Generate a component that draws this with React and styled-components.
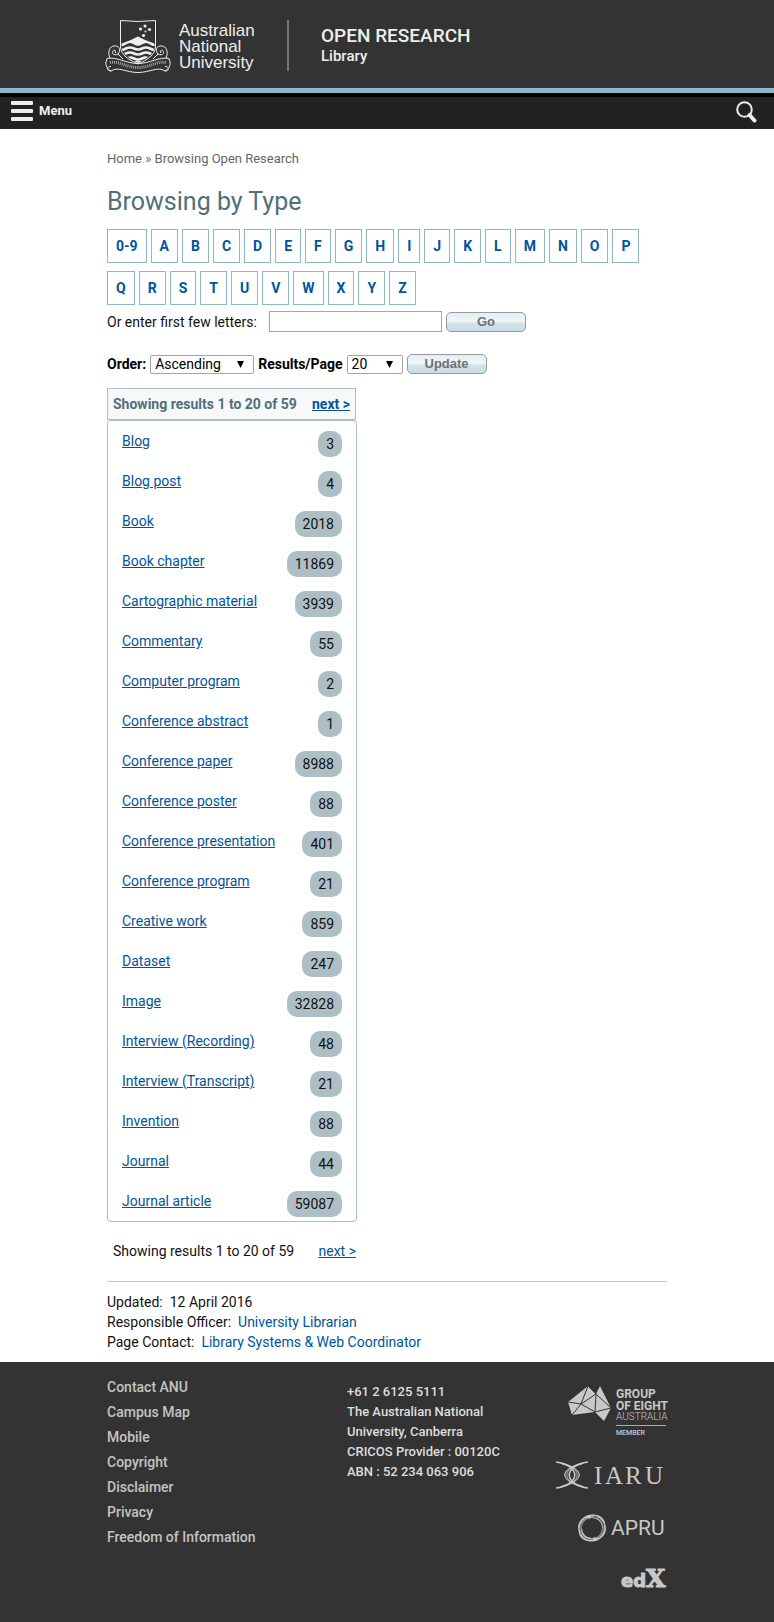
import React from 'react';
import styled, { createGlobalStyle } from 'styled-components';

const GlobalStyle = createGlobalStyle`
  *, *::before, *::after { box-sizing: border-box; }
  body {
    margin: 0;
    background: #fff;
    color: #111;
    font: 14px/20px Roboto, "Liberation Sans", sans-serif;
  }
`;

const Container = styled.div`
  max-width: 560px;
  margin: 0 auto;
`;

const Banner = styled.header`
  background: #333;
  border-bottom: 5px solid #8cb8cc;
`;

const BannerInner = styled(Container)`
  display: flex;
  align-items: flex-start;
  height: 88px;
  padding-top: 20px;
`;

const LogoLink = styled.a`
  display: block;
  width: 184px;
  height: 51px;
  margin-left: -2px;
  border-right: 2px solid #777;
  svg { display: block; overflow: visible; }
`;

const SiteTitle = styled.div`
  margin-left: 32px;
  padding-top: 4px;
  color: #eee;
  font-weight: 500;
`;

const SiteName = styled.div`
  font-size: 19px;
  line-height: 24px;
`;

const SiteUnit = styled.div`
  font-size: 15px;
  line-height: 16px;
`;

const MenuBar = styled.nav`
  display: flex;
  justify-content: space-between;
  align-items: flex-start;
  height: 36px;
  padding: 4px 16px 0 11px;
  background: #222;
  border-top: 4px solid #000;
`;

const BarButton = styled.button`
  display: flex;
  gap: 6px;
  padding: 0;
  border: 0;
  background: none;
  color: #eee;
  font: 700 13px/20px Roboto, sans-serif;
  cursor: pointer;
  svg { display: block; }
`;

const Breadcrumbs = styled.div`
  padding-top: 20px;
  color: #666;
  font-size: 13px;
  a { color: inherit; text-decoration: none; }
`;

const Heading = styled.h1`
  margin: 17px 0 11px;
  color: #4f6f7d;
  font-size: 25px;
  line-height: 32px;
  font-weight: 400;
`;

const LetterList = styled.div`
  display: flex;
  flex-wrap: wrap;
  gap: 8px 4px;
`;

const Letter = styled.a`
  padding: 6px 8px;
  border: 1px solid #8cb8cc;
  color: #00549e;
  font-weight: 700;
  text-decoration: none;
`;

const FormRow = styled.div`
  display: flex;
  align-items: center;
  gap: 4px;
  margin-top: ${p => p.$top}px;
`;

const TextLabel = styled.label`
  min-width: 158px;
`;

const BoldLabel = styled.label`
  color: #000;
  font-weight: 700;
`;

const TextInput = styled.input`
  width: 173px;
  height: 21px;
  padding: 1px 4px;
  border: 1px solid #a5a5a5;
  font: inherit;
`;

const PillButton = styled.button`
  width: 80px;
  height: 20px;
  padding: 0;
  border: 1px solid #999;
  border-radius: 5px;
  background: linear-gradient(#e4eef3, #f1f6f8 48%, #d3e2ea 56%, #c8dce7);
  color: #707070;
  font: 700 13px/16px "Liberation Sans", sans-serif;
  cursor: pointer;
`;

const SelectBox = styled.span`
  display: grid;
  width: ${p => p.$width}px;
  height: 19px;
  align-items: center;
  select, svg { grid-area: 1 / 1; }
  svg { justify-self: end; margin-right: 10px; pointer-events: none; }
  select {
    appearance: none;
    width: 100%;
    height: 19px;
    padding: 0 4px;
    border: 1px solid #a5a5a5;
    border-radius: 2px;
    background: #fff;
    color: #000;
    font: 14px/17px Roboto, sans-serif;
  }
`;

const Results = styled.section`
  width: 250px;
  margin-top: 14px;
`;

const ResultsHeader = styled.div`
  display: flex;
  justify-content: space-between;
  margin-right: 1px;
  padding: 5px;
  border: 1px solid #adbfc5;
  background: #f7f9f8;
  color: #4f6f7d;
  font-weight: 700;
`;

const TextLink = styled.a`
  color: #00549e;
  text-decoration: ${p => (p.$plain ? 'none' : 'underline')};
`;

const TypeList = styled.ul`
  margin: 0;
  padding: 0 14px;
  border: 1px solid #adbfc5;
  border-radius: 4px;
  list-style: none;
`;

const TypeItem = styled.li`
  display: flex;
  justify-content: space-between;
  align-items: flex-start;
  height: 40px;
  padding-top: 10px;
`;

const Count = styled.span`
  padding: 3px 8px;
  border-radius: 10px;
  background: #adbfc5;
`;

const ResultsFooter = styled.div`
  display: flex;
  justify-content: space-between;
  padding: 19px 1px 20px 6px;
`;

const PageInfo = styled.div`
  padding: 10px 0;
  border-top: 1px solid #ccc;
  p { margin: 0; }
`;

const Footer = styled.footer`
  min-height: 260px;
  background: #333;
  color: #ddd;
`;

const FooterInner = styled(Container)`
  display: grid;
  grid-template-columns: 240px 1fr 112px;
`;

const FooterLinks = styled.ul`
  margin: 0;
  padding: 13px 0 0;
  list-style: none;
  font-weight: 500;
  line-height: 25px;
  a { color: #c4c4c4; text-decoration: none; }
`;

const Address = styled.address`
  max-width: 170px;
  padding-top: 20px;
  font-size: 13px;
  font-style: normal;
  font-weight: 500;
`;

const Partners = styled.div`
  display: flex;
  flex-direction: column;
  align-items: flex-end;
  gap: 25px;
  padding-top: 24px;
  a, svg { display: block; }
  svg { overflow: visible; }
`;

const AnuLogo = () => (
  <svg width="146" height="54" viewBox="0 0 146 54" role="img" aria-label="Australian National University">
    <clipPath id="shield"><path d="M16.500 0H49.500V27C49 34 41 39 33 43C25 39 17 34 16.500 27Z" /></clipPath>
    <g fill="none" stroke="#eee">
      <path d="M15.500.5Q33 2.500 50.500.5V27C50 35 42 40 33 44C24 40 16 35 15.500 27Z" />
      <path d="M2 38.500C12 36.500 21 43.500 33 43.500S54 36.500 64 38.500L65 42C66 45 63 50 60 51C53 46 45 52.500 33 52.500S13 46 6 51C3 50 0 45 1 42Z" />
      <path d="M6 51C1 51 2 46 6 46.500M60 51C65 51 64 46 60 46.500" />
      <path d="M5 38C2 32 5 26 9 26C15 25 16 31 13 34C10 36 6 34 8 31C9 29 12 31 10 33M13 34L18 39M61 38C64 32 61 26 57 26C51 25 50 31 53 34C56 36 60 34 58 31C57 29 54 31 56 33M53 34L48 39" />
      <path strokeWidth="3" strokeDasharray="1 1" d="M5 42.500C14 40.500 21 47.500 33 47.500S52 40.500 61 42.500" opacity=".6" />
    </g>
    <g clipPath="url(#shield)">
      <path fill="#eee" d="M15 24Q25 21 33 16.500Q41 21 51 24V26.500Q47 26.500 45 24.500Q41 21.500 37 24.500Q33 27 29 24.500Q25 21.500 21 24.500Q19 26.500 15 26.500Z" />
      <path fill="none" stroke="#eee" strokeWidth="2.600" d="M13 30.500Q17 30.500 21 28.500T29 28.500T37 28.500T45 28.500T53 30.500M13 36Q17 35.500 21 33.500T29 33.500T37 33.500T45 33.500T53 36M21 39Q25 36.500 29 38.500T37 38.500T45 39" />
      <path fill="#eee" d="M27 42Q33 39 39 42L33 45Z" />
    </g>
    <g fill="#eee">
      <circle cx="40" cy="6" r="1.600" /><circle cx="35.500" cy="9" r="1.600" />
      <circle cx="44.500" cy="9.500" r="1.600" /><circle cx="40.500" cy="11.500" r="1" />
      <circle cx="38.500" cy="15.500" r="1.600" />
    </g>
    <g fill="#eee" fontFamily='"Liberation Sans", sans-serif' fontSize="17">
      <text x="74" y="16">Australian</text>
      <text x="74" y="32">National</text>
      <text x="74" y="48">University</text>
    </g>
  </svg>
);

const MenuIcon = () => (
  <svg width="22" height="20" viewBox="0 0 22 20" fill="#eee" aria-hidden="true">
    <rect width="22" height="4" y="0" rx="1" /><rect width="22" height="4" y="8" rx="1" /><rect width="22" height="4" y="16" rx="1" />
  </svg>
);

const SearchIcon = () => (
  <svg width="22" height="22" viewBox="0 0 22 22" fill="none" stroke="#eee" aria-hidden="true">
    <circle cx="8.500" cy="8.500" r="7.300" strokeWidth="2" />
    <path d="M13.500 14L18.500 19.500" strokeWidth="4" strokeLinecap="round" />
  </svg>
);

const Arrow = () => (
  <svg width="7" height="7" viewBox="0 0 7 7" aria-hidden="true"><path d="M0 0H7L3.500 7Z" /></svg>
);

const GroupOfEightLogo = () => (
  <svg width="99" height="50" viewBox="0 0 99 50" role="img" aria-label="Group of Eight Australia, member">
    <path fill="#c8c8c8" d="M0 16L20 0L28 8L32 0L43 22L36 35L27 26L4 29Z" />
    <path fill="none" stroke="#333" d="M0 16L13 18L20 0L28 8L13 18L4 29M13 18L27 26L28 8L43 22L27 26" />
    <g fill="#c8c8c8" fontFamily="Roboto, sans-serif" fontSize="12">
      <text x="48" y="12" fontWeight="700">GROUP</text>
      <text x="48" y="24" fontWeight="700">OF EIGHT</text>
      <text x="48" y="34" fontSize="10" fontWeight="300">AUSTRALIA</text>
      <text x="48" y="49" fontSize="7" fontWeight="500">MEMBER</text>
    </g>
    <path stroke="#aaa" d="M48 39.500H98" />
  </svg>
);

const IaruLogo = () => (
  <svg width="112" height="28" viewBox="0 0 112 28" role="img" aria-label="IARU">
    <g fill="none" stroke="#c8c8c8" strokeWidth=".8">
      <path d="M1 1C26 5 26 23 1 27M33 1C8 5 8 23 33 27" strokeWidth="1.600" />
      <path d="M3 1C29 6 28 22 3 27M5 2C31 7 30 21 5 26M31 1C5 6 6 22 31 27M29 2C3 7 4 21 29 26M7 3C30 9 30 19 7 25M27 3C4 9 4 19 27 25" />
    </g>
    <text x="39 50 70 90" y="23" fill="#c8c8c8" fontFamily='"Liberation Serif", serif' fontSize="25">IARU</text>
  </svg>
);

const ApruLogo = () => (
  <svg width="89" height="28" viewBox="0 0 89 28" role="img" aria-label="APRU">
    <g fill="none" stroke="#c8c8c8">
      <circle cx="14" cy="14" r="11.800" strokeWidth="3.400" />
      <g strokeWidth="1">
        <ellipse cx="14" cy="14" rx="14" ry="11.500" transform="rotate(-45 14 14)" />
        <ellipse cx="14" cy="14" rx="13.500" ry="11.500" transform="rotate(15 14 14)" />
      </g>
    </g>
    <path fill="none" stroke="#333" strokeWidth=".7" d="M3 20Q1 10 10 4M2 16Q2 8 8 4M13 3Q21 2 25 10M16 2Q24 4 26 12M25 9Q27 18 18 24M26 13Q26 20 20 24M15 25Q7 27 3 19" />
    <text x="33" y="21" fill="#c8c8c8" fontFamily="Roboto, sans-serif" fontSize="21">APRU</text>
  </svg>
);

const EdxLogo = () => (
  <svg width="47" height="22" viewBox="0 0 47 22" role="img" aria-label="edX">
    <text x="1" y="20" fill="#c8c8c8" stroke="#c8c8c8" strokeWidth="1" fontFamily='"DejaVu Sans", sans-serif' fontWeight="700" fontSize="18">
      ed<tspan fontFamily='"DejaVu Serif", serif' fontSize="25">X</tspan>
    </text>
  </svg>
);

const letters = ['0-9', ...'ABCDEFGHIJKLMNOPQRSTUVWXYZ'];

const types = [
  ['Blog', 3], ['Blog post', 4], ['Book', 2018], ['Book chapter', 11869],
  ['Cartographic material', 3939], ['Commentary', 55], ['Computer program', 2],
  ['Conference abstract', 1], ['Conference paper', 8988], ['Conference poster', 88],
  ['Conference presentation', 401], ['Conference program', 21], ['Creative work', 859],
  ['Dataset', 247], ['Image', 32828], ['Interview (Recording)', 48],
  ['Interview (Transcript)', 21], ['Invention', 88], ['Journal', 44], ['Journal article', 59087],
];

const footerLinks = ['Contact ANU', 'Campus Map', 'Mobile', 'Copyright', 'Disclaimer', 'Privacy', 'Freedom of Information'];

export default function App() {
  return (
    <>
      <GlobalStyle />
      <Banner>
        <BannerInner>
          <LogoLink href="#home"><AnuLogo /></LogoLink>
          <SiteTitle>
            <SiteName>OPEN RESEARCH</SiteName>
            <SiteUnit>Library</SiteUnit>
          </SiteTitle>
        </BannerInner>
      </Banner>
      <MenuBar>
        <BarButton type="button"><MenuIcon />Menu</BarButton>
        <BarButton type="button" aria-label="Search"><SearchIcon /></BarButton>
      </MenuBar>

      <Container as="main">
        <Breadcrumbs><a href="#home">Home</a> » Browsing Open Research</Breadcrumbs>
        <Heading>Browsing by Type</Heading>
        <LetterList>
          {letters.map(l => <Letter key={l} href={`#${l}`}>{l}</Letter>)}
        </LetterList>
        <FormRow $top={6}>
          <TextLabel htmlFor="starts">Or enter first few letters:</TextLabel>
          <TextInput id="starts" type="text" />
          <PillButton type="button">Go</PillButton>
        </FormRow>
        <FormRow $top={22}>
          <BoldLabel htmlFor="order">Order:</BoldLabel>
          <SelectBox $width={104}>
            <select id="order"><option>Ascending</option><option>Descending</option></select>
            <Arrow />
          </SelectBox>
          <BoldLabel htmlFor="rpp">Results/Page</BoldLabel>
          <SelectBox $width={56}>
            <select id="rpp" defaultValue="20"><option>10</option><option>20</option><option>50</option></select>
            <Arrow />
          </SelectBox>
          <PillButton type="button">Update</PillButton>
        </FormRow>

        <Results>
          <ResultsHeader>
            <span>Showing results 1 to 20 of 59</span>
            <TextLink href="#next">next &gt;</TextLink>
          </ResultsHeader>
          <TypeList>
            {types.map(([name, count]) => (
              <TypeItem key={name}>
                <TextLink href="#type">{name}</TextLink>
                <Count>{count}</Count>
              </TypeItem>
            ))}
          </TypeList>
          <ResultsFooter>
            <span>Showing results 1 to 20 of 59</span>
            <TextLink href="#next">next &gt;</TextLink>
          </ResultsFooter>
        </Results>

        <PageInfo>
          <p>Updated:&nbsp; 12 April 2016</p>
          <p>Responsible Officer:&nbsp; <TextLink $plain href="#librarian">University Librarian</TextLink></p>
          <p>Page Contact:&nbsp; <TextLink $plain href="#contact">Library Systems &amp; Web Coordinator</TextLink></p>
        </PageInfo>
      </Container>

      <Footer>
        <FooterInner>
          <FooterLinks>
            {footerLinks.map(l => <li key={l}><a href="#footer">{l}</a></li>)}
          </FooterLinks>
          <Address>
            +61 2 6125 5111<br />
            The Australian National University, Canberra<br />
            CRICOS Provider : 00120C<br />
            ABN : 52 234 063 906
          </Address>
          <Partners>
            <a href="#go8"><GroupOfEightLogo /></a>
            <a href="#iaru"><IaruLogo /></a>
            <a href="#apru"><ApruLogo /></a>
            <a href="#edx"><EdxLogo /></a>
          </Partners>
        </FooterInner>
      </Footer>
    </>
  );
}
